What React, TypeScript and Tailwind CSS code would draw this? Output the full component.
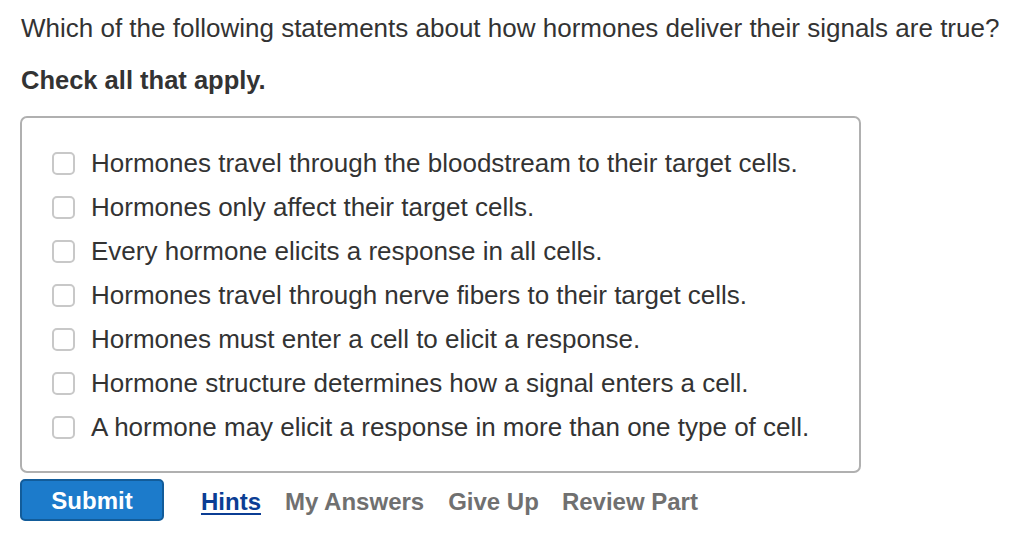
const options = [
  "Hormones travel through the bloodstream to their target cells.",
  "Hormones only affect their target cells.",
  "Every hormone elicits a response in all cells.",
  "Hormones travel through nerve fibers to their target cells.",
  "Hormones must enter a cell to elicit a response.",
  "Hormone structure determines how a signal enters a cell.",
  "A hormone may elicit a response in more than one type of cell.",
];

export default function App() {
  return (
    <div className="bg-white w-[1018px] h-[552px] px-[20px] pt-[10px] text-[#333] font-['Liberation_Sans',Arial,sans-serif]">
      <p className="text-[26px] leading-[36px] pl-[1px] whitespace-nowrap">
        Which of the following statements about how hormones deliver their signals are true?
      </p>
      <p className="text-[25.5px] leading-[36px] font-bold mt-[16px] pl-[1px]">Check all that apply.</p>
      <div className="mt-[18px] w-[841px] h-[357px] border-2 border-[#b0b0b0] rounded-[7px] pl-[30px] pt-[23px]">
        {options.map((o) => (
          <label key={o} className="flex items-center h-[44px]">
            <span className="w-[23px] h-[23px] border-2 border-[#c8c8c8] rounded-[5px] bg-white shrink-0" />
            <span className="ml-[16px] text-[26px] text-[#333] whitespace-nowrap">{o}</span>
          </label>
        ))}
      </div>
      <div className="flex items-center mt-[6px]">
        <button className="w-[144px] h-[42px] pt-[2px] bg-[#1c7bcb] border-2 border-[#125c9a] rounded-[5px] text-white font-bold text-[24px]">
          Submit
        </button>
        <a className="ml-[37px] pt-[3px] text-[24px] font-bold text-[#0b3d94] underline underline-offset-[3px]">Hints</a>
        <span className="ml-[24px] pt-[3px] text-[24px] font-bold text-[#707070]">My Answers</span>
        <span className="ml-[24px] pt-[3px] text-[24px] font-bold text-[#707070]">Give Up</span>
        <span className="ml-[23px] pt-[3px] text-[24px] font-bold text-[#707070]">Review Part</span>
      </div>
    </div>
  );
}
